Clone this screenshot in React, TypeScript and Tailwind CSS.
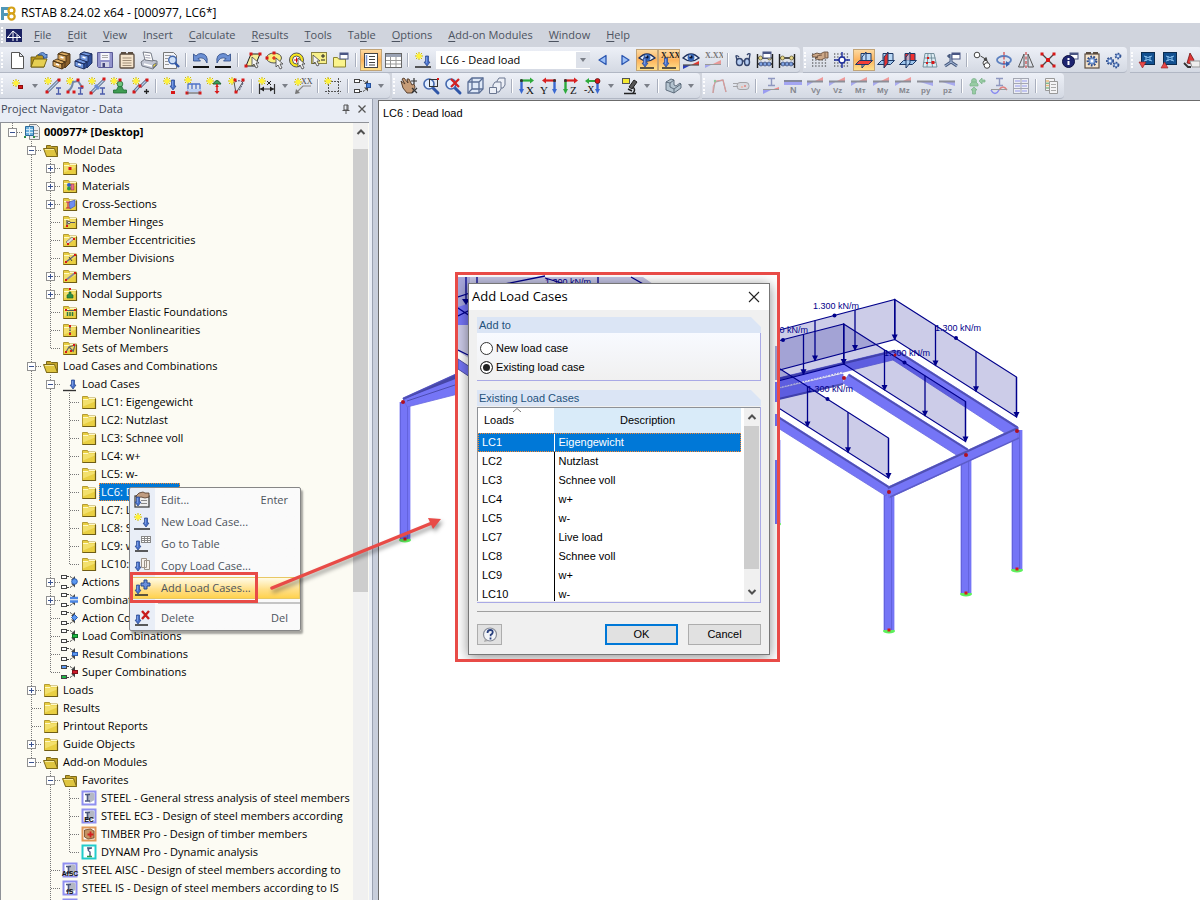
import { type ReactNode } from 'react'

const UI = "font-['Open_Sans','Noto_Sans',sans-serif]"
const DLG = "font-['Liberation_Sans',Arial,sans-serif]"

/* ---------- small drawing parts ---------- */

const Star = ({ x = 4, y = 4 }: { x?: number; y?: number }) => (
  <g transform={`translate(${x} ${y})`}>
    <path d="M0-4V4M-4 0H4M-3-3L3 3M-3 3L3-3" stroke="#cdbb00" strokeWidth="1" />
    <circle r="2.600" fill="#fff23a" />
  </g>
)
const Dot = ({ x, y, s = 3 }: { x: number; y: number; s?: number }) => (
  <rect x={x - s / 2} y={y - s / 2} width={s} height={s} fill="#d81818" />
)
const Down = ({ x = 10, y = 4, h = 10 }: { x?: number; y?: number; h?: number }) => (
  <g>
    <path d={`M${x - 1.5} ${y}h3v${h - 4}h1.500L${x} ${y + h}L${x - 3} ${y + h - 4}h1.500z`} fill="#4a72cc" stroke="#2d4c92" strokeWidth="0.800" />
    <path d={`M${x - 0.6} ${y + 1}v${h - 4}`} stroke="#8cacec" strokeWidth="0.800" />
  </g>
)
const Base = ({ y = 17 }: { y?: number }) => <path d={`M2 ${y}H18`} stroke="#333" strokeWidth="1.600" />
const Bar = ({ x1, y1, x2, y2 }: { x1: number; y1: number; x2: number; y2: number }) => (
  <g>
    <path d={`M${x1} ${y1}L${x2} ${y2}`} stroke="#4a5f80" strokeWidth="3" />
    <path d={`M${x1} ${y1}L${x2} ${y2}`} stroke="#b9cde8" strokeWidth="1.400" />
  </g>
)
const IBeam = ({ x = 14, y = 11 }: { x?: number; y?: number }) => (
  <path d={`M${x} ${y}h5M${x + 2.5} ${y}v6M${x} ${y + 6}h5`} stroke="#4c5cac" strokeWidth="1.300" fill="none" />
)
const Win = ({ x = 11, y = 2 }: { x?: number; y?: number }) => (
  <g>
    <rect x={x} y={y} width="8" height="6" fill="#fff" stroke="#4a5684" />
    <rect x={x} y={y} width="8" height="2" fill="#4a5684" />
  </g>
)
const Cursor = ({ x = 10, y = 8 }: { x?: number; y?: number }) => (
  <path transform={`translate(${x} ${y})`} d="M0 0v9l2-2 2 4 2-1-2-4h3z" fill="#f4f4f4" stroke="#444" strokeWidth="0.800" />
)
const Cabinet = ({ a, b, c }: { a: string; b: string; c: string }) => (
  <g stroke={c} strokeWidth="0.900" strokeLinejoin="round">
    <path d="M7 4l4-2 8 2v9l-5 5z" fill={b} />
    <path d="M7 4l4-2 8 2-4 2z" fill={a} />
    <path d="M7 4l8 2v6l-8-2z" fill={a} />
    <path d="M2 11l4-2 8 3-3 2zM2 11v5l9 3v-5z" fill={a} />
    <path d="M11 14l3-2v5l-3 2z" fill={b} />
    <path d="M9.500 7l3 1M5 14l3 1" stroke="#fff" strokeWidth="1.500" />
  </g>
)
const Lens = () => (
  <g>
    <path d="M12 12l5 5" stroke="#2f56a8" strokeWidth="3" strokeLinecap="round" />
    <circle cx="8" cy="8" r="5" fill="#e3efff" stroke="#4368ae" strokeWidth="1.600" />
  </g>
)
const Axes = ({ t, a, b, flip }: { t: string; a: string; b: string; flip?: boolean }) => (
  <g>
    <g transform={flip ? 'matrix(-1 0 0 1 20 0)' : undefined}>
      <path d="M4.500 14V4" stroke={b} strokeWidth="2.400" />
      <path d="M2 13h5L4.500 18z" fill={b} />
      <path d="M3 4.500h12" stroke={a} strokeWidth="2.200" />
      <path d="M13 1.500l4 3-4 3z" fill={a} />
      <circle cx="4.500" cy="4.500" r="1.500" fill="#333" />
    </g>
    <text x={flip ? 1 : 9} y="18" fontSize="11" fill="#111" fontFamily="Liberation Serif, serif">{t}</text>
  </g>
)
const Force = ({ t, down }: { t: string; down?: boolean }) => (
  <g>
    {down ? (
      <path d="M2 5h16v5z" fill="#a8aaf0" />
    ) : (
      <g>
        <path d="M10 5l8-4v4z" fill="#ee9a9a" />
        <path d="M2 5h8l-8 5z" fill="#a8aaf0" />
      </g>
    )}
    <path d="M2 5.500h16" stroke="#8d8f98" strokeWidth="2" />
    <text x="6" y="17" fontSize="8" fontWeight="bold" fill="#85878e" fontFamily="Liberation Sans, sans-serif">{t}</text>
  </g>
)
const Planes = ({ m }: { m: number }) => (
  <g stroke="#1d3866" strokeWidth="1" strokeLinejoin="round">
    <path d="M7 3.500h10v8H7z" fill={m === 3 ? '#f03030' : '#b9d8f6'} />
    {m !== 1 && <path d="M1.500 14.500l4-4h13l-4 4z" fill="#9cc4ec" />}
    <path d="M8 18V7l4-5v11z" fill={m === 2 ? '#e03030' : '#b9d8f6'} fillOpacity={m === 2 ? '1' : '0.700'} />
    {m === 1 && <path d="M1.500 14.500l4-4h13l-4 4z" fill="#f04038" />}
  </g>
)
const Combo = ({ a = '#fff', b = '#fff', children }: { a?: string; b?: string; children?: ReactNode }) => (
  <g>
    <rect x="1.500" y="3.500" width="5" height="3" fill={a} stroke="#444" />
    <rect x="1.500" y="13.500" width="5" height="3" fill={b} stroke="#444" />
    <path d="M7 4.500h3l3 2M7 15.500h3l3-2" stroke="#444" fill="none" strokeDasharray="2 1" />
    <path d="M11 8h4V4zM11 11.500h4v4z" fill="#444" />
    {children}
  </g>
)
const Eye = () => (
  <g>
    <path d="M2 8q8-8 16 0q-8 6-16 0z" fill="#eaf1fb" stroke="#1d2f5c" strokeWidth="1.300" />
    <circle cx="10" cy="7.500" r="3.400" fill="#3566b8" />
    <circle cx="10" cy="7" r="1.600" fill="#061030" />
    <circle cx="9" cy="6" r="0.800" fill="#fff" />
  </g>
)
const Abacus = () => (
  <g>
    <path d="M2.500 4v14M17.500 4v14M2 8h16M2 14h16" stroke="#222" strokeWidth="1.400" />
    <g fill="#e9d98a" stroke="#4a431c" strokeWidth="0.600">
      <circle cx="5.500" cy="8" r="2" /><circle cx="14.500" cy="8" r="2" />
    </g>
    <g fill="#7fa2e0" stroke="#1c2c5c" strokeWidth="0.600">
      <circle cx="6" cy="14" r="2" /><circle cx="10" cy="14" r="2" /><circle cx="14" cy="14" r="2" />
    </g>
  </g>
)
const Gear = ({ x, y, r }: { x: number; y: number; r: number }) => (
  <g>
    <circle cx={x} cy={y} r={r} fill="none" stroke="#2d4c8c" strokeWidth={r * 0.7} strokeDasharray="1.600 1.200" />
    <circle cx={x} cy={y} r={r * 0.8} fill="#8eb0e6" stroke="#3f62a4" strokeWidth="0.800" />
    <circle cx={x} cy={y} r={r * 0.35} fill="#fff" />
  </g>
)
const Dots = () => (
  <path d="M2 4h16M2 7h16M2 10h16M2 13h16M2 16h16" stroke="#333" strokeWidth="1.200" strokeDasharray="1.300 1.900" />
)
const Support = ({ x = 12, y = 8 }: { x?: number; y?: number }) => (
  <g transform={`translate(${x} ${y})`}>
    <path d="M-1.500 2h3l2 4h3v3h-13V6h3z" fill="#3f9c52" stroke="#1e6a34" strokeWidth="0.800" />
    <circle r="2.800" fill="#6cc47c" stroke="#1e6a34" strokeWidth="0.800" />
  </g>
)

const icons: Record<string, ReactNode> = {
  'New': <path d="M4.500 2.500h8l4 4v12h-12zM12.500 2.500v4h4" fill="#fff" stroke="#555" />,
  'Open': (
    <g stroke="#6b5a10" strokeWidth="0.900">
      <path d="M2 7h5l1-2h7v12H2z" fill="#b8961e" />
      <path d="M2 17l3-8h13l-3 8z" fill="#e6cf52" />
      <path d="M9 5q5-5 8 0l1-1v4h-4l1-1q-2-3-6-2z" fill="#6c98d8" stroke="#2c4f8c" />
    </g>
  ),
  'Block manager': <Cabinet a="#d9a961" b="#8a602c" c="#4a3214" />,
  'Project manager': <Cabinet a="#7297de" b="#31509a" c="#1c2c5c" />,
  'Save': (
    <g>
      <path d="M2.500 2.500h15v15h-14l-1-1z" fill="#9293cc" stroke="#5a5b98" />
      <path d="M5.500 3h9v7h-9z" fill="#f6f6fc" /><path d="M7 5.500h6M7 7.500h6" stroke="#aaa" />
      <path d="M6 12h8v5H6z" fill="#d2d3e6" /><path d="M7.500 13h2.500v4H7.500z" fill="#45467c" />
    </g>
  ),
  'Clipboard': (
    <g>
      <rect x="3" y="4" width="14" height="14" rx="1" fill="#f5e4cc" stroke="#5a4c40" strokeWidth="1.300" />
      <path d="M5.500 8h9M5.500 10.500h9M5.500 13h9M5.500 15.500h9" stroke="#a08e78" /><path d="M4 3h5M11 3h5" stroke="#5a4c40" strokeWidth="2" />
    </g>
  ),
  'Print': (
    <g stroke="#6a6f7c" strokeWidth="0.900">
      <path d="M2 12l4-3 12 2v4l-4 4-11-3z" fill="#c3c7d4" />
      <path d="M4 2l8 1 2 8-8-1z" fill="#fff" /><path d="M6 5l5 0.600M6.500 7.500l5 0.600" stroke="#99a" />
      <path d="M5 14l8 2" stroke="#fff" strokeWidth="1.500" /><path d="M14 15l3-2v2l-3 3z" fill="#f0d83a" />
    </g>
  ),
  'Preview': (
    <g>
      <path d="M2.500 2.500h10l3 3v13h-13z" fill="#f3f4f8" stroke="#777" /><path d="M4 5.500h6M4 8.500h3M4 11.500h3M4 14.500h4" stroke="#999" />
      <circle cx="11.500" cy="10" r="3.800" fill="#cfe0f8" stroke="#4368ae" strokeWidth="1.400" /><path d="M14 13l4 4" stroke="#2f56a8" strokeWidth="2.400" />
    </g>
  ),
  'Undo': (
    <g>
      <path d="M2.500 4v7h7l-2.500-2.500q6-2.500 9 4.500q1.500-9-6-9.500q-3-0.200-5 2.500z" fill="#6c90d4" stroke="#2a4884" strokeWidth="0.800" /><path d="M2 17h16" stroke="#111" strokeWidth="2" />
    </g>
  ),
  'Redo': (
    <g>
      <path d="M17.500 4v7h-7l2.500-2.500q-6-2.500-9 4.500q-1.500-9 6-9.500q3-0.200 5 2.500z" fill="#6c90d4" stroke="#2a4884" strokeWidth="0.800" /><path d="M2 17h16" stroke="#111" strokeWidth="2" />
    </g>
  ),
  'Select parallelogram': (
    <g><path d="M8 4h9l-5 12H3z" fill="#f6ee9a" stroke="#222" /><Cursor x={9} y={7} /><Dot x={8} y={4} /><Dot x={17} y={4} /><Dot x={3} y={16} /></g>
  ),
  'Select ellipse': (
    <g><ellipse cx="9" cy="8" rx="7.500" ry="5" fill="#f8ef7c" stroke="#555" /><Dot x={9} y={3} /><Dot x={2} y={8} /><path d="M7 8h4M9 6v4" stroke="#d00" /><Cursor x={11} y={8} /></g>
  ),
  'Select ring': (
    <g><circle cx="9.500" cy="10" r="7" fill="#f7e61a" stroke="#555" /><circle cx="9.500" cy="10" r="4" fill="#fff" stroke="#555" /><path d="M7 10h5M9.500 7.500v5" stroke="#d00" /><Cursor x={11} y={8} /></g>
  ),
  'Select plus minus': (
    <g><rect x="2.500" y="2.500" width="15" height="11" fill="#f8f08a" stroke="#8b8440" /><path d="M12 6h4M14 4v4M12 10h4" stroke="#222" /><Cursor x={4} y={5} /></g>
  ),
  'Select special': <g><path d="M2.500 7.500h4l1 1.500h7v8h-12z" fill="#fbf48c" stroke="#8c8430" /><Win x={9} y={3} /></g>,
  'Navigator': (
    <g><rect x="3.500" y="3.500" width="13" height="14" fill="#fff" stroke="#444" /><path d="M8 6.500h6M8 9.500h6M8 12.500h6M8 15h6" stroke="#444" /><path d="M5.500 5v11" stroke="#7a94d0" strokeWidth="1.500" /></g>
  ),
  'Tables': (
    <g><rect x="2.500" y="3.500" width="16" height="14" fill="#fff" stroke="#666" /><rect x="3" y="4" width="15" height="3" fill="#9aa2b4" /><path d="M3 10.500h15M3 14h15M7.500 7v10M13 7v10" stroke="#999" /></g>
  ),
  'New load case': <g><Star x={6} y={6} /><Down x={14} y={6} h={10} /><Base /></g>,
  'Previous': <path d="M13 5.500v9l-7-4.500z" fill="#9cc0f8" stroke="#2a55b0" strokeWidth="1.300" strokeLinejoin="round" />,
  'Next': <path d="M7 5.500v9l7-4.500z" fill="#9cc0f8" stroke="#2a55b0" strokeWidth="1.300" strokeLinejoin="round" />,
  'Show loads': <g><Eye /><Down x={8} y={8} h={9} /><path d="M3 18h14" stroke="#333" strokeWidth="1.600" /></g>,
  'Show load values': (
    <g><text x="2" y="8" fontSize="8" fontWeight="bold" fill="#222" fontFamily="Liberation Serif, serif">X.XX</text><Down x={7} y={8} h={9} /><path d="M3 18h14" stroke="#333" strokeWidth="1.600" /></g>
  ),
  'Show results': <g><path d="M10 15l8-4v4z" fill="#e03a30" /><path d="M2 15h8l-8 4z" fill="#2a3cb8" /><path d="M2 15h16" stroke="#555" strokeWidth="1.300" /><Eye /></g>,
  'Result values': (
    <g><text x="2" y="8" fontSize="8" fontWeight="bold" fill="#777" fontFamily="Liberation Serif, serif">X.XX</text><path d="M10 14l8-4v4z" fill="#e89a98" /><path d="M2 14h8l-8 4z" fill="#a3a6ec" /><path d="M2 14.500h16" stroke="#999" /></g>
  ),
  'Glasses': (
    <g stroke="#34446c" strokeWidth="1.400"><ellipse cx="6.500" cy="12" rx="3" ry="3.500" fill="#b4ccf2" /><ellipse cx="14" cy="12" rx="2.500" ry="3.500" fill="#b4ccf2" /><path d="M4 10L3 6q1-1 3 1M16 10l1-6q-1-1-3 1M9 11h3" fill="none" /></g>
  ),
  'Calculate': <g><Abacus /><Win x={8} y={2} /></g>,
  'Calculate all': <Abacus />,
  'Work plane': (
    <g><Dots /><path d="M2 5l5-2 3 1 4-2h4v6h-3l-4 2-5-1-1-1 3-1-5 0z" fill="#cda888" stroke="#5c4230" strokeWidth="0.800" /><path d="M7 6l5-1M15 2.500v5" stroke="#5c4230" strokeWidth="0.700" /></g>
  ),
  'Grid origin': <g><Dots /><path d="M10 2v16M2 10h16" stroke="#1c2c9c" strokeWidth="1.400" /><circle cx="10" cy="10" r="3" fill="#fff" stroke="#1c2c9c" strokeWidth="1.400" /></g>,
  'Plane XY': <Planes m={1} />,
  'Plane YZ': <Planes m={2} />,
  'Plane XZ': <Planes m={3} />,
  'Grid': (
    <g><path d="M5 3.500h9l3 13.500H3zM8 3.500L7 17M11 3.500l1.500 13.500M4.500 8h11M3.500 12.500h12.500" fill="#dcecf4" stroke="#6c8894" strokeWidth="0.900" /><Dot x={8} y={8} s={2} /><Dot x={13} y={12.5} /><Dot x={7} y={13} s={2} /></g>
  ),
  'Guidelines': <g><path d="M3 16l6-4M9 4v8l6 4M6 5q3 4 6 0" stroke="#4a5c80" strokeWidth="3" fill="none" /><path d="M3 16l6-4M9 4v8l6 4" stroke="#a9bddc" fill="none" /><Win x={10} y={3} /></g>,
  'Copy move': <g fill="#fff" stroke="#444"><circle cx="5" cy="5" r="2.800" /><circle cx="13.500" cy="13" r="2.500" /><circle cx="15" cy="15.500" r="2.800" /><path d="M8.500 6l5 3" fill="none" /><path d="M15 10.500l-3-0.500 2-2.500z" fill="#444" /></g>,
  'Rotate': <g><ellipse cx="10" cy="10" rx="7" ry="4" fill="none" stroke="#5c80c0" strokeWidth="1.800" /><path d="M10 2v16" stroke="#c22" strokeDasharray="3 1.500" /><path d="M12 11v6l4-3z" fill="#3a62b0" /></g>,
  'Mirror': <g fill="none" stroke="#555"><path d="M8 4v13H2.500zM12 4v13h5.500z" /><path d="M10 2v16" stroke="#c22" strokeDasharray="3 1.500" /></g>,
  'Connect': <g><path d="M4 4l12 12M16 4L4 16" stroke="#444" strokeWidth="1.300" /><Dot x={4} y={4} /><Dot x={16} y={4} /><Dot x={4} y={16} /><Dot x={16} y={16} /><Dot x={10} y={10} s={4} /></g>,
  'Info': <g><Win x={10} y={3} /><circle cx="8.500" cy="11.500" r="6" fill="#1d2470" stroke="#0c1040" /><path d="M8.500 11v4M8.500 8v2" stroke="#fff" strokeWidth="2" /></g>,
  'Settings': <g><rect x="3" y="4" width="14" height="14" fill="#f5e4cc" stroke="#5a4c40" strokeWidth="1.200" /><path d="M4 3h5M11 3h5" stroke="#5a4c40" strokeWidth="2" /><Gear x={10} y={11} r={4} /></g>,
  'Options': <g><Gear x={6} y={11} r={3} /><Gear x={14} y={6} r={2.5} /><Gear x={12} y={15} r={2.5} /></g>,
  'Import': <g><rect x="4.500" y="2.500" width="13" height="12" fill="#125090" stroke="#0b2c50" /><path d="M7 6q4 3 8 0M7 11q4-3 8 0M9 6v5M13 6v5" stroke="#8cc4f0" fill="none" /><path d="M2 12h7l-3.500 6z" fill="#e84848" stroke="#902020" strokeWidth="0.600" /></g>,
  'Export': <g><rect x="4.500" y="2.500" width="13" height="12" fill="#125090" stroke="#0b2c50" /><path d="M7 6q4 3 8 0M7 11q4-3 8 0M9 6v5M13 6v5" stroke="#8cc4f0" fill="none" /><path d="M2 18h7l-3.500-6z" fill="#e84848" stroke="#902020" strokeWidth="0.600" /></g>,
  'Report': <g><path d="M9 3l4 7-2 4-5-1z" fill="#e03636" stroke="#701414" strokeWidth="0.800" /><path d="M9 11h10v6h-8z" fill="#eee" stroke="#999" /><path d="M3 13l4 4h3" stroke="#333" strokeWidth="1.800" /></g>,

  'Node': <g><Star x={9} y={7} /><rect x="11.500" y="9.500" width="4" height="3" fill="#d81818" stroke="#8c0c0c" /></g>,
  'Member': <g><Star x={5} y={5} /><Bar x1={4} y1={16} x2={16} y2={4} /><Dot x={4} y={16} /><Dot x={16} y={4} /><IBeam x={13} y={12} /></g>,
  'Member arc': <g><Star x={5} y={5} /><path d="M3 15q4-2 5-9l5-1 4 6" fill="none" stroke="#7086a8" strokeWidth="2" /><Dot x={3} y={16} /><Dot x={13} y={4} /><Dot x={17} y={11} /><Dot x={9} y={16} /><IBeam x={13} y={12} /></g>,
  'Member chain': <g><Star x={5} y={5} /><Bar x1={4} y1={17} x2={17} y2={4} /><path d="M8 9l4 4" stroke="#6c8cd4" strokeWidth="3" /><Dot x={17} y={3} /><Dot x={4} y={17} /><IBeam x={13} y={12} /></g>,
  'Nodal support': <g><Star x={5} y={5} /><Support x={11} y={8} /><Dot x={11} y={4} /></g>,
  'Member set': <g><Star x={5} y={5} /><Bar x1={3} y1={16} x2={9} y2={9} /><Bar x1={9} y1={11} x2={16} y2={4} /><Dot x={3} y={16} /><Dot x={16} y={4} /><Dot x={9} y={10} /><path d="M13 15.500h5M15.500 13v5" stroke="#222" strokeWidth="1.300" /></g>,
  'Nodal load': <g><Star x={6} y={5} /><Down x={12} y={4} h={10} /><rect x="10" y="15" width="4" height="3" fill="#d81818" /></g>,
  'Member load': <g><Star x={5} y={4} /><path d="M5 8h12M5 8v7M9 8v7M13 8v7M17 8v7" stroke="#4d72c8" strokeWidth="1.300" /><path d="M4 13h14l-1 3H5z" fill="#bcd0f2" /><Dot x={4} y={17} /><Dot x={17} y={17} /><path d="M4 17h13" stroke="#555" /></g>,
  'Imposed deformation': <g><Star x={5} y={5} /><path d="M8 8q4-7 8 0z" fill="#3fa05a" stroke="#1c6030" /><path d="M12 8v8" stroke="#d81818" strokeWidth="1.400" /><path d="M10 11l2-2 2 2zM9.500 15h5l-2.500 3z" fill="#d81818" /></g>,
  'Imperfection': <g><Star x={5} y={5} /><path d="M7 6l2 11L17 4" fill="none" stroke="#555" /><path d="M8 6q5-3 8 1l-4 8" fill="none" stroke="#446" strokeDasharray="2 1" /><Dot x={8} y={4} /><Dot x={16} y={4} /><Dot x={9} y={16} /></g>,
  'Dimension': <g><Star x={5} y={5} /><path d="M2.500 8v10M17.500 8v10M2 13h16" stroke="#333" strokeWidth="1.200" /><path d="M3 13l4-2.500v5zM17 13l-4-2.500v5z" fill="#222" /><path d="M10 5l4 4M14 5l-4 4" stroke="#222" /></g>,
  'Comment': <g><Star x={5} y={6} /><path d="M3 17l7-7h8" stroke="#888" strokeWidth="1.200" fill="none" /><path d="M2 18l1-5 4 4z" fill="#777" /><text x="8" y="8" fontSize="8" fill="#444" fontFamily="Liberation Serif, serif">XX</text></g>,
  'Section box': <g><path d="M2 5.500h16M2 15.500h16M5.500 2v16M15.500 2v16" fill="none" stroke="#555" strokeDasharray="2 1" /><Star x={5} y={5} /></g>,
  'Combinations': <Combo><rect x="13.500" y="7.500" width="4" height="4" fill="#4a86e0" stroke="#24509c" /></Combo>,
  'Pan': (
    <g><path d="M2 5l4 3-3-5 2-1 4 5-1-4 2 0 3 6 2-1 1 3-3 6H8l-4-5z" fill="#c69c78" stroke="#4d3524" strokeWidth="0.900" /><path d="M15 2v6M12 5h6M13 12l5 5M18 12l-5 5" stroke="#333" strokeWidth="1.200" /></g>
  ),
  'Zoom window': <g><Lens /><rect x="8.500" y="3.500" width="8" height="7" fill="none" stroke="#333" /><Dot x={17} y={3} s={2} /></g>,
  'Zoom delete': <g><Lens /><path d="M8 3l8 8M16 3l-8 8" stroke="#d42020" strokeWidth="2.200" /></g>,
  'Isometric': <g fill="#dfe9f8" stroke="#5b6f96" strokeWidth="1.300"><path d="M3 6l4-4h11v11l-4 4H3z" /><path d="M3 6h11v11M14 6l4-4M7 2v11L3 17M7 13h11" fill="none" /></g>,
  'Cascade': <g fill="#eceff6" stroke="#6a7690"><path d="M10 5l2-3h6v7l-2 3h-6z" /><path d="M6 9l2-3h6v7l-2 3H6z" /><path d="M2.500 11.500h7v6h-7z" /></g>,
  'View X': <Axes t="X" a="#2eaa3c" b="#3a68d0" />,
  'View Y': <Axes t="Y" a="#d82020" b="#3a68d0" flip />,
  'View Z': <Axes t="Z" a="#d82020" b="#2eaa3c" />,
  'View -X': <g><path d="M4 5h10" stroke="#2eaa3c" strokeWidth="2" /><path d="M6 2L2 5l4 3z" fill="#2eaa3c" /><path d="M14.500 6v9" stroke="#3a68d0" strokeWidth="2.400" /><path d="M12 13h5l-2.500 5z" fill="#3a68d0" /><circle cx="14.500" cy="5" r="2.500" fill="#d81818" stroke="#501010" strokeWidth="0.700" /><text x="1" y="17" fontSize="10" fill="#111" fontFamily="Liberation Serif, serif">-X</text></g>,
  'Render': <g><rect x="3.500" y="2.500" width="7" height="5" fill="#f5ea30" stroke="#555" /><path d="M10 11l5-7 3 2-5 7z" fill="#555" stroke="#222" /><path d="M5 17.500h12M14 11q3 3 0 6M9 13l4 2" stroke="#222" strokeWidth="1.500" fill="none" /></g>,
  'Solid': <g stroke="#566474" strokeWidth="0.900"><path d="M3 6l5-3 3 1v5l2 1 4-3 1 1v4l-7 5-8-3z" fill="#b4c4d0" /><path d="M3 6l4 1v4l4 2v4M7 7l4-3M11 13l7-5" fill="none" /></g>,
  'Deformation': <g><path d="M4 17L6 6l8-2 3 12" stroke="#aaa" strokeWidth="1.300" fill="none" /><path d="M4 17q-1-7 3-12l7-1q1 5 3 12" stroke="#e0989a" fill="none" /><circle cx="6" cy="5" r="1.200" fill="#8cc89a" /></g>,
  'Key': <g fill="#d8d9de" stroke="#a4a4a8"><rect x="6" y="6.500" width="12" height="7" rx="3" /><path d="M2 7.500h5M2 10.500h5" /><circle cx="11" cy="11" r="1" fill="#f0b0a0" stroke="none" /><circle cx="14" cy="10" r="1" fill="#e08080" stroke="none" /></g>,
  'Stress': <g><path d="M7 2.500h7M10.500 2.500v7M7 9.500h7" stroke="#8f98c0" strokeWidth="1.400" /><path d="M10 14l8-3v3z" fill="#ee8a8a" /><path d="M2 14h8l-8 4z" fill="#9a9cf0" /><path d="M2 13.500h16" stroke="#999" /></g>,
  'N': <g><path d="M1 5h18v4H1z" fill="#a3a5f2" /><path d="M1 5h18" stroke="#85899c" strokeWidth="2" /><text x="7" y="17" fontSize="9" fontWeight="bold" fill="#85878e" fontFamily="Liberation Sans, sans-serif">N</text></g>,
  'Vy': <Force t="Vy" />, 'Vz': <Force t="Vz" />, 'MT': <Force t="Mт" />, 'My': <Force t="My" />, 'Mz': <Force t="Mz" />,
  'py': <Force t="py" down />, 'pz': <Force t="pz" down />,
  'Reactions': <g fill="#98cca4" stroke="#78b088" strokeWidth="0.700"><circle cx="7" cy="5" r="2.500" /><path d="M3 10h8v-2l-2-2H5L3 8zM7 11l3 3H8.500v4h-3v-4H4zM12 5l3-3v2h3v2h-3v2z" /></g>,
  'Sections': <g><path d="M7 2.500h7M10.500 2.500v7M7 9.500h7" stroke="#8f98c0" strokeWidth="1.400" /><path d="M2 14q4 7 8 0" fill="none" stroke="#8a8cf0" strokeWidth="1.400" /><path d="M10 14q4-6 8 0" fill="none" stroke="#e08080" strokeWidth="1.400" /><path d="M2 13.500h16" stroke="#999" /></g>,
  'Diagrams': <g><rect x="2.500" y="2.500" width="15" height="15" fill="#eceef4" stroke="#a4a7b2" /><path d="M3 7.500h14M3 12.500h14M10 3v14" stroke="#a4a7b2" /><path d="M4 5h5M11 5h5M4 10h5M11 10h5M4 15h5M11 15h5" stroke="#b3b6ee" strokeWidth="1.500" /></g>,
  'Printout': <g><path d="M4.500 2.500h9v12h-9z" fill="#f4f4f6" stroke="#999" /><path d="M8.500 5.500h8v12h-8z" fill="#f4f4f6" stroke="#999" /><path d="M5 5h3M5 9.500h3" stroke="#e8b878" strokeWidth="1.500" /><path d="M5 7.300h3M5 12h3" stroke="#84bc8c" strokeWidth="1.500" /><path d="M10 8.500h5M10 11.500h5M10 14.500h5" stroke="#aaa" /></g>,
}

const Icon = ({ name }: { name: string }) => (
  <svg viewBox="0 0 20 20" className="size-5 shrink-0" fill="none" aria-hidden="true">{icons[name]}</svg>
)

/* ---------- toolbars ---------- */

const Grip = () => (
  <span className="mx-px h-4 w-1 shrink-0 border-l-2 border-dotted border-[#fdfdfe]" />
)
const Sep = () => (
  <span className="flex w-2 shrink-0 justify-center"><span className="h-3.5 w-0.5 border-r border-white bg-[#a9afbd]" /></span>
)
const Caret = () => (
  <button type="button" aria-label="More" className="flex w-3.5 shrink-0 justify-center">
    <svg viewBox="0 0 6 4" className="h-1 w-1.5"><path d="M0 0h6L3 4z" fill="#7b7f88" /></svg>
  </button>
)
const Tool = ({ name, active }: { name: string; active?: boolean }) => (
  <button
    type="button"
    aria-label={name}
    className={
      active
        ? 'flex h-[22px] w-[22px] shrink-0 items-center justify-center border border-[#c2a477] bg-linear-to-b from-[#fcd9a0] via-[#fdb35c] to-[#fde08c]'
        : 'flex h-[22px] w-[22px] shrink-0 items-center justify-center'
    }
  >
    <Icon name={name} />
  </button>
)

const Band = ({ items, open, children }: { items: string; open?: boolean; children?: ReactNode }) => (
  <div
    className={
      'flex h-[26px] shrink-0 items-center rounded-r border-b border-[#b1b7c4] bg-linear-to-b from-[#edf0f7] to-[#d4d9e3]' +
      (open ? '' : ' pr-0.5')
    }
  >
    <Grip />
    {items.split(',').map((it, i) => {
      if (it === '|') return <Sep key={i} />
      if (it === 'v') return <Caret key={i} />
      if (it === '#') return <span key={i} className="contents">{children}</span>
      if (it[0] === '*') return <Tool key={i} name={it.slice(1)} active />
      return <Tool key={i} name={it} />
    })}
  </div>
)

const LoadCaseSelect = () => (
  <div className="mx-0.5 flex h-[18px] w-[154px] shrink-0 items-center bg-white">
    <select
      aria-label="Load case"
      className="h-full min-w-0 flex-1 appearance-none bg-white pl-1 text-[11px] leading-[18px] text-black"
    >
      <option>LC6 - Dead load</option>
    </select>
    <span className="flex h-4 w-3.5 items-center justify-center bg-[#dde1e9]">
      <svg viewBox="0 0 6 4" className="h-1 w-1.5"><path d="M0 0h6L3 4z" fill="#7b7f88" /></svg>
    </span>
  </div>
)

const menus = ['File', 'Edit', 'View', 'Insert', 'Calculate', 'Results', 'Tools', 'Ta_ble', 'Options', 'Add-on Modules', 'Window', 'Help']

const MenuLabel = ({ text }: { text: string }) => {
  const at = text.indexOf('_')
  const s = text.replace('_', '')
  const k = at < 0 ? 0 : at
  return <>{s.slice(0, k)}<u className="underline-offset-2">{s[k]}</u>{s.slice(k + 1)}</>
}

/* ---------- navigator tree ---------- */

type Row = { l: number; t: string; i: string; e?: '+' | '-' }
const rows: Row[] = [
  { l: 0, t: '000977* [Desktop]', i: 'model', e: '-' },
  { l: 1, t: 'Model Data', i: 'open', e: '-' },
  { l: 2, t: 'Nodes', i: 'nodes', e: '+' },
  { l: 2, t: 'Materials', i: 'materials', e: '+' },
  { l: 2, t: 'Cross-Sections', i: 'sections', e: '+' },
  { l: 2, t: 'Member Hinges', i: 'hinges' },
  { l: 2, t: 'Member Eccentricities', i: 'ecc' },
  { l: 2, t: 'Member Divisions', i: 'div' },
  { l: 2, t: 'Members', i: 'members', e: '+' },
  { l: 2, t: 'Nodal Supports', i: 'supports', e: '+' },
  { l: 2, t: 'Member Elastic Foundations', i: 'elastic' },
  { l: 2, t: 'Member Nonlinearities', i: 'nonlin' },
  { l: 2, t: 'Sets of Members', i: 'sets' },
  { l: 1, t: 'Load Cases and Combinations', i: 'open', e: '-' },
  { l: 2, t: 'Load Cases', i: 'load', e: '-' },
  { l: 3, t: 'LC1: Eigengewicht', i: 'folder' },
  { l: 3, t: 'LC2: Nutzlast', i: 'folder' },
  { l: 3, t: 'LC3: Schnee voll', i: 'folder' },
  { l: 3, t: 'LC4: w+', i: 'folder' },
  { l: 3, t: 'LC5: w-', i: 'folder' },
  { l: 3, t: 'LC6: Dead load', i: 'folder' },
  { l: 3, t: 'LC7: Live load', i: 'folder' },
  { l: 3, t: 'LC8: Schnee voll', i: 'folder' },
  { l: 3, t: 'LC9: w+', i: 'folder' },
  { l: 3, t: 'LC10: w-', i: 'folder' },
  { l: 2, t: 'Actions', i: 'actions', e: '+' },
  { l: 2, t: 'Combination Expressions', i: 'expr', e: '+' },
  { l: 2, t: 'Action Combinations', i: 'actionCombo' },
  { l: 2, t: 'Load Combinations', i: 'loadCombo' },
  { l: 2, t: 'Result Combinations', i: 'resultCombo' },
  { l: 2, t: 'Super Combinations', i: 'superCombo' },
  { l: 1, t: 'Loads', i: 'folder', e: '+' },
  { l: 1, t: 'Results', i: 'folder' },
  { l: 1, t: 'Printout Reports', i: 'folder' },
  { l: 1, t: 'Guide Objects', i: 'folder', e: '+' },
  { l: 1, t: 'Add-on Modules', i: 'open', e: '-' },
  { l: 2, t: 'Favorites', i: 'open', e: '-' },
  { l: 3, t: 'STEEL - General stress analysis of steel members', i: 'steel' },
  { l: 3, t: 'STEEL EC3 - Design of steel members according', i: 'ec' },
  { l: 3, t: 'TIMBER Pro - Design of timber members', i: 'timber' },
  { l: 3, t: 'DYNAM Pro - Dynamic analysis', i: 'dynam' },
  { l: 2, t: 'STEEL AISC - Design of steel members according to', i: 'aisc' },
  { l: 2, t: 'STEEL IS - Design of steel members according to IS', i: 'is' },
  { l: 2, t: '', i: 'steel' },
]

const Folder = ({ children }: { children?: ReactNode }) => (
  <g>
    <path d="M3.500 4.500h5l1 1.500h7v10.500h-13z" fill="#e9cf42" stroke="#b39a34" />
    <path d="M4 7.500h12v2l-12 5z" fill="#f3e06c" />
    <path d="M4 7.500h5l1-1h6" fill="none" stroke="#fff9c8" />
    <path d="M16.500 7v9.500h-13" fill="none" stroke="#6f5d16" strokeWidth="1.200" />
    {children}
  </g>
)
const Mod = ({ c, t, children }: { c: string; t?: string; children?: ReactNode }) => (
  <g>
    <rect x="3.500" y="3.500" width="13" height="13" fill="#fff" stroke={c} strokeWidth="2" />
    {children ?? (
      <g>
        <path d="M7 6l6-1.500 2.500 1v6.500l-5 3z" fill="#b4b8c4" /><path d="M6 6.500h5M8.500 6.500v6M6 13h5" stroke="#4a567c" strokeWidth="1.600" />
      </g>
    )}
    {t && <text x="10" y="16" textAnchor="middle" fontSize="7" fontWeight="bold" fill="#111" fontFamily="Liberation Sans, sans-serif">{t}</text>}
  </g>
)

const treeIcons: Record<string, ReactNode> = {
  model: (
    <g>
      <path d="M7.500 2.500h7l3 3v12h-10z" fill="#ececee" stroke="#888" /><path d="M12 8.500h4M12 11.500h4M12 14.500h4" stroke="#999" />
      <path d="M3.500 4.500h8v9h-8z" fill="#6cb0dc" stroke="#2a6a9c" /><path d="M4 7.500h7M4 10.500h7M7.500 5v8" stroke="#cfe8f8" /><path d="M3 14v2M12 14v2" stroke="#2e8c44" strokeWidth="2" />
    </g>
  ),
  open: (
    <g stroke="#7d6a1a">
      <path d="M5.500 5.500h4l1 1h6v10h-11z" fill="#c4a42a" /><path d="M2.500 8.500h11l3 8h-11z" fill="#dfc540" /><path d="M4 9.500h9" stroke="#f8eb9c" />
    </g>
  ),
  folder: <Folder />,
  nodes: <Folder><Dot x={10} y={10.5} /></Folder>,
  materials: <Folder><circle cx="9" cy="9" r="2" fill="#2a60d0" /><circle cx="9" cy="12.500" r="2" fill="#2c9c44" /><rect x="11" y="8" width="3" height="6" fill="#e8708a" stroke="#8c2040" strokeWidth="0.500" /></Folder>,
  sections: <Folder><path d="M9 8l6-2v6l-5 3z" fill="#6d8cf0" stroke="#3450b0" strokeWidth="0.600" /><path d="M6 8h4M8 8v6M6 14h4" stroke="#c42c4c" strokeWidth="1.200" /></Folder>,
  hinges: <Folder><path d="M7 8v6M7 10.500h8" stroke="#556" strokeWidth="1.200" /><circle cx="9" cy="10.500" r="1.300" fill="#fff" stroke="#333" strokeWidth="0.800" /><Dot x={7} y={14} s={2} /></Folder>,
  ecc: <Folder><path d="M6 12l6-5 2 2-6 5z" fill="#ddd" stroke="#777" strokeWidth="0.800" /><Dot x={8} y={14} s={2} /><Dot x={14} y={9} s={2} /></Folder>,
  div: <Folder><path d="M6 14l9-7" stroke="#667" strokeWidth="1.500" /><path d="M9 9l3 4" stroke="#444" /><Dot x={6} y={14} s={2} /><Dot x={15} y={7} s={2} /></Folder>,
  members: <Folder><path d="M6 14l9-7" stroke="#889" strokeWidth="1.800" /><Dot x={6} y={14} s={2} /><Dot x={15} y={7} s={2} /></Folder>,
  supports: <Folder><Dot x={10} y={5} s={2} /><path d="M9 8h2v2l2 1v3H7v-3l2-1z" fill="#2e9044" stroke="#14602a" strokeWidth="0.600" /></Folder>,
  elastic: <Folder><path d="M6 8.500h8" stroke="#555" /><path d="M7.500 10v4M10 10v4M12.500 10v4" stroke="#2e7c44" strokeWidth="1.500" /><Dot x={6} y={8} s={2} /><Dot x={15} y={8} s={2} /></Folder>,
  nonlin: <Folder><path d="M10 7v8" stroke="#666" strokeWidth="1.800" strokeDasharray="1.500 1" /><Dot x={10} y={6} s={2} /><Dot x={10} y={14} s={2} /></Folder>,
  sets: <Folder><path d="M6 14l3-5 4 4M9 9l6-2-2 7" stroke="#666" strokeWidth="1.200" fill="none" /><Dot x={6} y={14} s={2} /><Dot x={14} y={7} s={2} /><Dot x={11} y={13} s={2} /></Folder>,
  load: <g><Down x={13} y={6} h={9} /><path d="M3 16.500h13" stroke="#333" strokeWidth="1.400" /></g>,
  actions: <Combo><circle cx="14.500" cy="9.500" r="2.800" fill="#5c98f0" stroke="#2c5cb0" /></Combo>,
  expr: <Combo><path d="M10 8h8M10 11.500h8" stroke="#4c86e4" strokeWidth="2.400" /></Combo>,
  actionCombo: <Combo><path d="M14.500 6.500l3 3-3 3-3-3z" fill="#5c98f0" stroke="#2c5cb0" /></Combo>,
  loadCombo: <Combo><rect x="12.500" y="8.500" width="5" height="3" fill="#20b844" stroke="#0c7024" /></Combo>,
  resultCombo: <Combo><rect x="12.500" y="8.500" width="5" height="3" fill="#5c98f0" stroke="#2c5cb0" /></Combo>,
  superCombo: <Combo a="#5c98f0" b="#20b844"><rect x="12.500" y="8.500" width="5" height="3" fill="#d01c2c" stroke="#801018" /></Combo>,
  steel: <Mod c="#8f8ff0" />,
  ec: <Mod c="#8f8ff0" t="EC" />,
  timber: <Mod c="#e09858"><path d="M5.500 6l6-1 3.500 2v7l-6 1-3.500-2z" fill="#c39464" stroke="#6c4420" strokeWidth="0.800" /><path d="M8.500 10.500h6M11.500 7.500v6" stroke="#d42020" strokeWidth="1.800" /></Mod>,
  dynam: <Mod c="#22cccc"><path d="M8 6h5M12.500 6q-6 1-1.500 4v4" stroke="#4a567c" strokeWidth="1.400" fill="none" /><path d="M8 14.500h5" stroke="#2c9c44" strokeWidth="1.500" /></Mod>,
  aisc: <Mod c="#8f8ff0" t="AISC" />,
  is: <Mod c="#8f8ff0" t="IS" />,
}

// does the guide line in column c go on below row i
const goesOn = (i: number, c: number) => {
  for (let k = i + 1; k < rows.length; k++) {
    if (rows[k].l < c) return false
    if (rows[k].l === c) return true
  }
  return false
}

const Guide = ({ i, c }: { i: number; c: number }) => {
  const row = rows[i]
  const own = c === row.l
  const below = goesOn(i, c)
  return (
    <svg viewBox="0 0 19 18" className="h-[18px] w-[19px] shrink-0" stroke="#777" strokeDasharray="1 1" aria-hidden="true">
      {own ? (
        <g>
          <path d={below ? 'M9.500 0V18' : 'M9.500 0V10'} />
          <path d="M10 9.500H21" />
          {row.e && (
            <g strokeDasharray="none">
              <rect x="5.500" y="5.500" width="8" height="8" fill="#fff" stroke="#919191" />
              <path d={row.e === '+' ? 'M7 9.500h5M9.500 7v5' : 'M7 9.500h5'} stroke="#3a5390" />
            </g>
          )}
        </g>
      ) : (
        below && <path d="M9.500 0V18" />
      )}
    </svg>
  )
}

const TreeRow = ({ i }: { i: number }) => {
  const row = rows[i]
  const selected = row.t.startsWith('LC6')
  return (
    <li className="flex h-[18px] items-center pl-0.5 whitespace-nowrap">
      {Array.from({ length: row.l + 1 }, (_, c) => <Guide key={c} i={i} c={c} />)}
      <svg viewBox="0 0 20 20" className="size-5 shrink-0" fill="none" aria-hidden="true">{treeIcons[row.i]}</svg>
      <span
        className={
          selected
            ? 'bg-[#0078d7] px-0.5 text-white outline-1 outline-dotted -outline-offset-1 outline-[#ff8728]'
            : row.l === 0
              ? 'px-0.5 font-bold'
              : 'px-0.5'
        }
      >
        {row.t}
      </span>
    </li>
  )
}

const Chevron = ({ down }: { down?: boolean }) => (
  <svg viewBox="0 0 10 6" className="h-1.5 w-2.5 shrink-0" aria-hidden="true">
    <path d={down ? 'M1.500 1L5 4.500L8.500 1' : 'M1.500 5L5 1.500L8.500 5'} fill="none" stroke="#505050" strokeWidth="2" />
  </svg>
)

const Navigator = () => (
  <aside className="flex w-[372px] shrink-0 flex-col bg-[#e9edf5] text-[11px]">
    <header className="flex h-5 shrink-0 items-center pr-0.5 pl-px text-[#3d4655]">
      <h2 className="flex-1">Project Navigator - Data</h2>
      <button type="button" aria-label="Pin" className="flex size-4 items-center justify-center">
        <svg viewBox="0 0 10 10" className="size-2.5" fill="none" stroke="#555"><path d="M3 1h4v5H3zM6 1v5M1.500 6.500h7M5 6.500V10" /></svg>
      </button>
      <button type="button" aria-label="Close navigator" className="flex size-4 items-center justify-center">
        <svg viewBox="0 0 10 10" className="size-2.5" stroke="#555" strokeWidth="1.300"><path d="M1.500 1.500l7 7M8.500 1.500l-7 7" /></svg>
      </button>
    </header>
    <div className="mt-[3px] mr-[3px] flex min-h-0 flex-1 border-t border-l border-[#8e9197] bg-[#fcfbf3]">
      <ul className="min-w-0 flex-1 overflow-hidden leading-[18px]">
        {rows.map((_, i) => <TreeRow key={i} i={i} />)}
      </ul>
      <div className="mr-px flex w-[15px] shrink-0 flex-col items-center bg-[#f0f0f0] pt-1.5">
        <Chevron />
        <span className="mt-3.5 h-[443px] w-full bg-[#cdcdcd]" />
      </div>
    </div>
  </aside>
)

/* ---------- model view ---------- */

const NAVY = '#00008b'

const LoadArrow = ({ x, y }: { x: number; y: number }) => (
  <g>
    <path d={`M${x} ${y}v40`} stroke={NAVY} strokeWidth="1.300" />
    <path d={`M${x - 3} ${y + 35}h6l-3 6z`} fill={NAVY} />
  </g>
)
const Load = ({ a, b, arrows }: { a: number[]; b: number[]; arrows: number[] }) => {
  const at = (x: number) => a[1] + ((b[1] - a[1]) * (x - a[0])) / (b[0] - a[0])
  return (
    <g>
      <path
        d={`M${a[0]} ${a[1]}L${b[0]} ${b[1]}v40L${a[0]} ${a[1] + 40}z`}
        fill={NAVY}
        fillOpacity="0.200"
        stroke={NAVY}
        strokeWidth="1.200"
      />
      {arrows.map((x) => <LoadArrow key={x} x={x} y={at(x)} />)}
    </g>
  )
}
const Column = ({ x, y1, y2 }: { x: number; y1: number; y2: number }) => (
  <g>
    <ellipse cx={x} cy={y2 + 1} rx="6" ry="2.500" fill="#5cf05c" />
    <rect x={x - 6} y={y1} width="12" height={y2 - y1} fill="#c9c9fb" />
    <rect x={x - 5} y={y1} width="10" height={y2 - y1} fill="#7575f6" />
    <path d={`M${x - 4.5} ${y1}V${y2}M${x + 2.5} ${y1}V${y2}`} stroke="#6363dd" />
    <Dot x={x} y={y2} s={3} />
  </g>
)
const Beam = ({ d, edge }: { d: string; edge: string }) => (
  <g>
    <path d={d} fill="#7575f6" stroke="#6a6ae0" strokeWidth="0.800" />
    <path d={edge} stroke="#5050b4" strokeWidth="2" fill="none" />
  </g>
)

const labels: [number, number][] = [[813, 309], [762, 333], [935, 331], [884, 356], [807, 392]]
const dots: [number, number][] = [[834.5, 315.5], [783, 340], [956, 338], [904.5, 362.5], [827.5, 399]]

const Model = () => (
  <svg viewBox="379 101 821 799" className="absolute top-0 left-0 h-[799px] w-[821px]" fill="none" aria-label="Structure with loads">
    <Column x={775} y1={440} y2={523} />
    <Column x={1017} y1={430} y2={569} />
    <Column x={966} y1={456} y2={593} />
    <Column x={889} y1={492} y2={630} />
    <Column x={405} y1={402} y2={539} />
    <Beam d="M403 398L458 373V394L407 407z" edge="M403 399L458 374" />
    <path d="M404 399L458 374V378z" fill="#4646a8" />
    <path d="M407 401L458 384" stroke="#4c4cb0" />
    <Beam d="M770 380L895 350L897 359L770 390z" edge="M770 381L895 351" />
    <Beam d="M770 391L843 374V384L770 401z" edge="M770 401L843 384" />
    <path d="M770 390L843 372" stroke="#eee" strokeDasharray="2 1" />
    <Beam d="M897 350L1018 427L1008 435L893 360z" edge="M897 351L1018 428" />
    <Beam d="M849 374L968 449L958 456L843 383z" edge="M849 375L968 450" />
    <Beam d="M770 411L890 487L886 496L770 423z" edge="M770 412L890 488" />
    <Beam d="M888 487L1018 427V438L889 498z" edge="M888 488L1018 428" />
    <path d="M890 497L1019 438" stroke="#5c5cc8" strokeWidth="1.500" />
    <Load a={[770, 332.5]} b={[894.7, 299.500]} arrows={[815, 855, 894.7]} />
    <Load a={[770, 343]} b={[843.7, 324]} arrows={[775, 803.5, 843.7]} />
    <Load a={[894.7, 299.500]} b={[1016.5, 377]} arrows={[935.5, 976, 1016.5]} />
    <Load a={[843.7, 324]} b={[965.5, 401.500]} arrows={[884.5, 925, 965.5]} />
    <Load a={[766, 360]} b={[888.5, 438]} arrows={[807.5, 848, 888.5]} />
    {dots.map(([x, y]) => <circle key={x} cx={x} cy={y} r="2" fill={NAVY} />)}
    {labels.map(([x, y]) => (
      <text key={x} x={x} y={y} fontSize="9" fill={NAVY} fontFamily="Liberation Sans, Arial, sans-serif">1.300 kN/m</text>
    ))}
    <g fill="#b01020">
      <circle cx="889" cy="492" r="2" /><circle cx="966" cy="455" r="2" /><circle cx="1017" cy="431" r="2" />
      <circle cx="895" cy="355" r="1.500" /><circle cx="844" cy="378" r="2" /><circle cx="403" cy="402" r="2" />
    </g>
  </svg>
)

/* ---------- dialog ---------- */

const cases = [
  ['LC1', 'Eigengewicht'], ['LC2', 'Nutzlast'], ['LC3', 'Schnee voll'], ['LC4', 'w+'], ['LC5', 'w-'],
  ['LC7', 'Live load'], ['LC8', 'Schnee voll'], ['LC9', 'w+'], ['LC10', 'w-'],
]

const Group = ({ title, children }: { title: string; children: ReactNode }) => (
  <section>
    <h3 className="h-4 bg-[#dbe5f5] pl-0.5 leading-4 text-[#24527c] [clip-path:polygon(0_0,calc(100%-10px)_0,100%_10px,100%_100%,0_100%)]">
      {title}
    </h3>
    {children}
  </section>
)

const radio =
  'size-[13px] appearance-none rounded-full border border-[#333] bg-white checked:bg-[#222] checked:shadow-[inset_0_0_0_2px_white]'

const Dialog = () => (
  <div
    role="dialog"
    aria-label="Add Load Cases"
    className={`absolute top-2 left-2.5 flex w-[302px] flex-col border border-[#777] bg-[#f0f0f0] text-[11px] text-black shadow-[0_2px_12px_rgba(0,0,0,0.45)] ${DLG}`}
  >
    <header className={`flex h-[26px] items-center bg-white pr-[7px] pl-[3px] ${UI}`}>
      <h2 className="flex-1 text-[13px]">Add Load Cases</h2>
      <button type="button" aria-label="Close" className="flex size-4 items-center justify-center">
        <svg viewBox="0 0 12 12" className="size-3" stroke="#222" strokeWidth="1.100"><path d="M1 1l10 10M11 1L1 11" /></svg>
      </button>
    </header>
    <div className="flex flex-col px-2 pt-[7px] pb-[9px]">
      <Group title="Add to">
        <div className="flex flex-col gap-[3px] border-r border-b border-[#a9a9e6] bg-linear-to-b from-[#f8faff] to-[#f0f0f0] pt-[7px] pb-[5px] pl-[3px]">
          <label className="flex h-4 items-center gap-[3px]">
            <input type="radio" name="target" className={radio} /> New load case
          </label>
          <label className="flex h-4 items-center gap-[3px]">
            <input type="radio" name="target" defaultChecked className={radio} /> Existing load case
          </label>
        </div>
      </Group>
      <div className="h-[9px]" />
      <Group title="Existing Load Cases">
        <div className="mt-px border-r border-b border-[#a9a9e6] pb-px">
          <div className="flex h-[194px] overflow-hidden border-t border-l border-[#8e9197] bg-white">
            <table className="h-fit flex-1 table-fixed border-collapse text-left">
              <thead>
                <tr className="h-[25px]">
                  <th className="w-[76px] p-0 align-top font-normal">
                    <svg viewBox="0 0 8 4" className="ml-[35px] h-1 w-2" fill="none" stroke="#777"><path d="M0 4l4-3.500L8 4" /></svg>
                    <span className="block pl-1.5 leading-4">Loads</span>
                  </th>
                  <th className="bg-[#d9ebf9] p-0 text-center font-normal">Description</th>
                </tr>
              </thead>
              <tbody>
                {cases.map(([id, name], i) => (
                  <tr
                    key={id}
                    className={
                      i === 0
                        ? 'h-[19px] bg-[#0078d7] text-white outline-1 outline-dotted -outline-offset-1 outline-[#ff8728]'
                        : 'h-[19px]'
                    }
                  >
                    <td className={i === 0 ? 'border-r border-white p-0 pl-1' : 'border-r border-black p-0 pl-1'}>{id}</td>
                    <td className="p-0 pl-1">{name}</td>
                  </tr>
                ))}
              </tbody>
            </table>
            <div className="ml-[3px] flex w-[15px] flex-col items-center justify-between bg-[#f0f0f0] py-1.5">
              <Chevron />
              <span className="mt-1.5 mb-5 w-full flex-1 bg-[#cdcdcd]" />
              <Chevron down />
            </div>
            <span className="w-px bg-[#f0f0f0]" />
          </div>
        </div>
      </Group>
      <hr className="mt-2 border-t border-[#a0a0a0]" />
      <div className="mt-3 flex h-[21px] gap-2.5">
        <button type="button" aria-label="Help" className="flex w-[25px] items-center justify-center border border-[#adadad] bg-[#e1e1e1]">
          <svg viewBox="0 0 16 16" className="size-4">
            <circle cx="8" cy="7.500" r="6.500" fill="#f2f4f8" stroke="#8a8e98" strokeWidth="1.200" />
            <path d="M3 12l-1 3 4-1z" fill="#aaa" />
            <path d="M5.500 6q0-3 2.800-3q2.700 0 2.400 2.500q-0.300 1.500-2 2.300v1.500M8.500 10.500v2" fill="none" stroke="#29407e" strokeWidth="1.800" />
          </svg>
        </button>
        <span className="flex-1" />
        <button type="button" className="w-[73px] border-2 border-[#0078d7] bg-[#e1e1e1]">OK</button>
        <button type="button" className="w-[73px] border border-[#adadad] bg-[#e1e1e1]">Cancel</button>
      </div>
    </div>
  </div>
)

// background showing round the dialog inside the frame
const Backdrop = () => (
  <svg viewBox="458 275 319 384" className="absolute inset-0 h-full w-full" fill="none" aria-hidden="true">
    <path d="M458 275h319v384H458z" fill="#fff" />
    <path d="M458 277h185l20 14H458v60l12 8v-60z" fill="#c4c4e4" />
    <path d="M458 277h12v40h-12z" fill="#a6a6da" />
    <path d="M458 307l12-4v22l-12 4z" fill="#7575f6" />
    <path d="M458 325h12v33l-12-8z" fill="#cccbe8" />
    <path d="M458 359l12 8v10l-12-8z" fill="#7575f6" stroke="#5050a8" />
    <path d="M466 277v22M477 277v10M458 297l12-4M458 316l12-6M458 308l12 8M458 350l10 5M505 284l40-8M545 278l20 6M598 277v8M631 277l14 8" stroke={NAVY} strokeWidth="1.300" />
    <path d="M462 299h8l-4 6z" fill={NAVY} />
    <text x="545" y="285" fontSize="9" fill={NAVY} fontFamily="Liberation Sans, Arial, sans-serif">1.300 kN/m</text>
    <path d="M775 346h2v34h-2z" fill="#a6a6da" />
    <path d="M775 382h2v20h-2zM775 414h2v12h-2zM775 460h2v64h-2z" fill="#7575f6" />
  </svg>
)

/* ---------- context menu ---------- */

const ctx: { t: string; k?: string; i: ReactNode; on?: boolean }[] = [
  { t: 'Edit...', k: 'Enter', i: <g><rect x="3" y="6" width="14" height="11" fill="#eee" stroke="#444" strokeWidth="1.300" /><path d="M9 10.500h6M9 13.500h6" stroke="#888" /><path d="M4 6l3-3 4-1 2 1h4v4l-4 1-4-1-4 1z" fill="#c09c80" stroke="#4d3524" strokeWidth="0.800" /><Down x={6} y={7} h={9} /></g> },
  { t: 'New Load Case...', i: <g><Star x={6} y={5} /><Down x={14} y={6} h={9} /><Base /></g> },
  { t: 'Go to Table', i: <g><Down x={6} y={7} h={9} /><rect x="9.500" y="2.500" width="9" height="6" fill="#fff" stroke="#888" /><path d="M10 4.500h8M10 6.500h8M12.500 3v5M15.500 3v5" stroke="#888" /><path d="M3 17h13" stroke="#333" strokeWidth="1.600" /></g> },
  { t: 'Copy Load Case...', i: <g><Down x={6} y={6} h={9} /><path d="M9.500 2.500h5v9h-5zM12.500 4.500h5v9h-5z" fill="#f6f1ea" stroke="#9c9388" /><path d="M3 17h13" stroke="#333" strokeWidth="1.600" /></g> },
  { t: 'Add Load Cases...', on: true, i: <g><Down x={6} y={7} h={9} /><path d="M12 2h3v3h3v3h-3v3h-3V8H9V5h3z" fill="#6a90dc" stroke="#27488c" /><path d="M3 17h13" stroke="#333" strokeWidth="1.600" /></g> },
  { t: 'Delete', k: 'Del', i: <g><Down x={6} y={7} h={9} /><path d="M10 3l7 8M17 3l-7 8" stroke="#c81c1c" strokeWidth="2.400" /><path d="M3 17h13" stroke="#333" strokeWidth="1.600" /></g> },
]

const ContextMenu = () => (
  <div
    role="menu"
    className="absolute top-[487px] left-[129px] w-[172px] rounded-xs border border-[#868686] bg-linear-to-r from-[#e9eef7] from-[25px] to-[#fafafa] to-[25px] py-px text-[11px] text-[#4c535c] shadow-[2px_3px_2px_rgba(0,0,0,0.35)]"
  >
    {ctx.map((m) => (
      <div key={m.t}>
        {m.k === 'Del' && <hr className="my-[3px] ml-7 border-t-2 border-[#c5c5c5]" />}
        <button
          type="button"
          role="menuitem"
          className={
            m.on
              ? 'flex h-[22px] w-full items-center border border-[#e8c864] bg-linear-to-b from-[#fffbe6] via-[#ffe08a] via-55% to-[#ffd24c] pr-3 pl-px text-left'
              : 'flex h-[22px] w-full items-center pr-3 pl-0.5 text-left'
          }
        >
          <svg viewBox="0 0 20 20" className="mr-[9px] size-5 shrink-0" fill="none" aria-hidden="true">{m.i}</svg>
          <span className="flex-1">{m.t}</span>
          {m.k && <span>{m.k}</span>}
        </button>
      </div>
    ))}
  </div>
)

/* ---------- page ---------- */

export default function App() {
  return (
    <div className={`relative flex h-screen flex-col overflow-hidden bg-[#d0d4dd] text-black ${UI}`}>
      <header className="flex h-[23px] shrink-0 items-center gap-1 bg-white pt-0.5 pl-px">
        <svg viewBox="0 0 16 16" className="size-4" fill="none" aria-hidden="true">
          <path d="M0 2h8v3H3v3h4v3H3v4H0z" fill="#4f97b8" />
          <circle cx="10.500" cy="5.500" r="3" fill="#fff" stroke="#d4a017" strokeWidth="2.200" />
          <circle cx="10.500" cy="11.500" r="3.200" fill="#fff" stroke="#d4a017" strokeWidth="2.200" />
        </svg>
        <h1 className="text-[12px]">RSTAB 8.24.02 x64 - [000977, LC6*]</h1>
      </header>

      <nav className="flex h-6 shrink-0 items-center text-[11px] text-[#4c5360]">
        <Grip />
        <svg viewBox="0 0 16 13" className="mr-3 h-[13px] w-4" fill="none" aria-hidden="true">
          <path d="M0 0h16v13H0z" fill="#1b2263" />
          <path d="M1 8.500h14M7 2L2 8M7 2v10M7 2l7 6M11 6v6" stroke="#fff" />
        </svg>
        <div className="flex gap-4">
          {menus.map((m) => <button key={m} type="button"><MenuLabel text={m} /></button>)}
        </div>
      </nav>

      <div className="flex shrink-0 gap-[3px] overflow-hidden">
        <Band items="New,Open,Block manager,Project manager,Save,Clipboard,Print,Preview,|,Undo,Redo,|,Select parallelogram,Select ellipse,Select ring,Select plus minus,Select special,|,*Navigator,Tables,|,New load case,#,Previous,Next,*Show loads,*Show load values,Show results,Result values,|,Glasses,Calculate,Calculate all">
          <LoadCaseSelect />
        </Band>
        <Band items="Work plane,Grid origin,*Plane XY,Plane YZ,Plane XZ,Grid,Guidelines,|,Copy move,Rotate,Mirror,Connect,Info,Settings,Options" />
        <Band items="Import,Export,Report" open />
      </div>
      <div className="flex shrink-0 gap-[2px]">
        <Band items="Node,v,Member,Member arc,Member chain,Nodal support,Member set,|,Nodal load,Member load,Imposed deformation,Imperfection,|,Dimension,v,Comment,|,Section box,|,Combinations,v" />
        <Band items="Pan,Zoom window,Zoom delete,Isometric,Cascade,|,View X,View Y,View Z,View -X,v,Render,v,|,Solid,v" />
        <Band items="Deformation,Key,|,Stress,N,Vy,Vz,MT,My,Mz,py,pz,|,Reactions,Sections,Diagrams,|,Printout" />
      </div>

      <div className="flex min-h-0 flex-1">
        <Navigator />
        <div className="w-1.5 shrink-0 border-l border-[#9aa1b0] bg-[#c8cedb]" />
        <main className="relative mt-px flex-1 overflow-hidden border-t border-l border-[#6b6b6b] bg-white">
          <p className={`pt-1.5 pl-1 text-[11px] leading-3 ${DLG}`}>LC6 : Dead load</p>
          <Model />
          <div className="absolute top-[171px] left-[76px] h-[390px] w-[325px] border-3 border-[#e84b47]">
            <div className="relative h-full w-full overflow-hidden">
              <Backdrop />
              <Dialog />
            </div>
          </div>
        </main>
      </div>

      <ContextMenu />
      <div className="pointer-events-none absolute top-[572px] left-[130px] h-[31px] w-[128px] border-3 border-[#e84b47]" />
      <svg viewBox="262 510 190 90" className="pointer-events-none absolute top-[510px] left-[262px] h-[90px] w-[190px] drop-shadow-[2px_3px_2px_rgba(0,0,0,0.4)]" aria-hidden="true">
        <path d="M272 588L432 523" stroke="#e84b47" strokeWidth="3.500" strokeLinecap="round" />
        <path d="M441 519l-13-1 5 11z" fill="#e84b47" />
      </svg>
    </div>
  )
}
